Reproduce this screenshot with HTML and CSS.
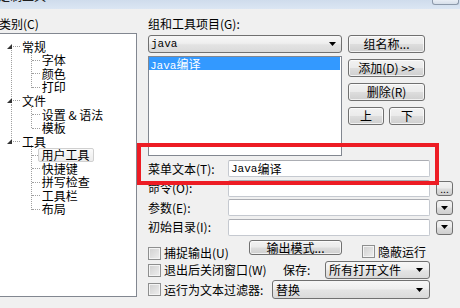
FILE: index.html
```html
<!DOCTYPE html>
<html>
<head>
<meta charset="utf-8">
<link rel="stylesheet" href="styles.css">
</head>
<body>
<div class="titlebar"><span class="title">定制工具</span><span class="tb-btn"></span></div>
<div class="main">
  <div class="left">
    <div class="lbl cat">类别(C)</div>
    <div class="tree">
      <div class="node">
        <div class="row"><span class="tog"><svg width="5" height="5" viewBox="0 0 5 5"><polygon points="5,0 5,5 0,5" fill="#333"/></svg></span><span class="hl"></span><span class="txt">常规</span></div>
        <div class="kids">
          <div class="row kid"><span class="hl"></span><span class="txt">字体</span></div>
          <div class="row kid"><span class="hl"></span><span class="txt">颜色</span></div>
          <div class="row kid"><span class="hl"></span><span class="txt">打印</span></div>
        </div>
      </div>
      <div class="node">
        <div class="row"><span class="tog"><svg width="5" height="5" viewBox="0 0 5 5"><polygon points="5,0 5,5 0,5" fill="#333"/></svg></span><span class="hl"></span><span class="txt">文件</span></div>
        <div class="kids">
          <div class="row kid"><span class="hl"></span><span class="txt">设置 &amp; 语法</span></div>
          <div class="row kid"><span class="hl"></span><span class="txt">模板</span></div>
        </div>
      </div>
      <div class="node">
        <div class="row"><span class="tog"><svg width="5" height="5" viewBox="0 0 5 5"><polygon points="5,0 5,5 0,5" fill="#333"/></svg></span><span class="hl"></span><span class="txt">工具</span></div>
        <div class="kids">
          <div class="row kid sel"><span class="hl"></span><span class="txt">用户工具</span></div>
          <div class="row kid"><span class="hl"></span><span class="txt">快捷键</span></div>
          <div class="row kid"><span class="hl"></span><span class="txt">拼写检查</span></div>
          <div class="row kid"><span class="hl"></span><span class="txt">工具栏</span></div>
          <div class="row kid"><span class="hl"></span><span class="txt">布局</span></div>
        </div>
      </div>
    </div>
  </div>

  <div class="right">
    <div class="lbl grp">组和工具项目(G):</div>
    <div class="top-area">
      <div class="col-a">
        <div class="combo"><span class="lat">java</span><span class="arrow"><svg width="7" height="4" viewBox="0 0 7 4"><polygon points="0,0 7,0 3.5,4" fill="#000"/></svg></span></div>
        <div class="list"><div class="list-sel"><span class="lat">Java</span>编译</div></div>
      </div>
      <div class="col-b">
        <div class="btn">组名称...</div>
        <div class="btn">添加(D) &gt;&gt;</div>
        <div class="btn">删除(R)</div>
        <div class="btn-pair"><div class="btn">上</div><div class="btn">下</div></div>
      </div>
    </div>

    <div class="form">
      <div class="flbl">菜单文本(T):</div>
      <div class="input"><span class="lat">Java</span>编译</div>
      <div></div>
      <div class="flbl">命令(O):</div>
      <div class="input"></div>
      <div class="sbtn dots">...</div>
      <div class="flbl">参数(E):</div>
      <div class="input"></div>
      <div class="sbtn"><svg width="7" height="4" viewBox="0 0 7 4"><polygon points="0,0 7,0 3.5,4" fill="#000"/></svg></div>
      <div class="flbl">初始目录(I):</div>
      <div class="input"></div>
      <div class="sbtn"><svg width="7" height="4" viewBox="0 0 7 4"><polygon points="0,0 7,0 3.5,4" fill="#000"/></svg></div>
    </div>

    <div class="bottom">
      <div class="brow ra">
        <label class="chk w-a"><span class="box"></span><span>捕捉输出(U)</span></label>
        <div class="btn out">输出模式...</div>
        <label class="chk hide"><span class="box"></span><span>隐蔽运行</span></label>
      </div>
      <div class="brow rb">
        <label class="chk w-b"><span class="box"></span><span>退出后关闭窗口(W)</span></label>
        <span class="save">保存:</span>
        <div class="combo c-save"><span>所有打开文件</span><span class="arrow"><svg width="7" height="4" viewBox="0 0 7 4"><polygon points="0,0 7,0 3.5,4" fill="#000"/></svg></span></div>
      </div>
      <div class="brow rc">
        <label class="chk w-c"><span class="box"></span><span>运行为文本过滤器:</span></label>
        <div class="combo c-rep"><span>替换</span><span class="arrow"><svg width="7" height="4" viewBox="0 0 7 4"><polygon points="0,0 7,0 3.5,4" fill="#000"/></svg></span></div>
      </div>
    </div>
  </div>
</div>
<div class="redbox"></div>
</body>
</html>
```
FILE: styles.css
```css
html, body {
  margin: 0;
  padding: 0;
}
body {
  width: 460px;
  height: 308px;
  overflow: hidden;
  position: relative;
  background: #f0f0f0;
  font-family: "Noto Sans CJK SC", "Liberation Sans", sans-serif;
  font-size: 12px;
  line-height: 14px;
  color: #000;
}
.lat {
  font-family: "Liberation Mono", monospace;
  font-size: 11px;
}
.titlebar {
  height: 9px;
  background: linear-gradient(#cfdcec, #dbe6f3);
  overflow: hidden;
  display: flex;
  justify-content: space-between;
}
.title {
  margin-top: -11px;
  margin-left: -2px;
  font-size: 12px;
  line-height: 14px;
  color: #1e1e1e;
}
.tb-btn {
  width: 27px;
  height: 5px;
  margin-right: 1px;
  box-sizing: border-box;
  border: 1px solid #8c99aa;
  border-top: none;
  border-radius: 0 0 3px 3px;
  background: linear-gradient(#e9eef5, #d6dfea);
}
.main {
  display: flex;
  padding-top: 8px;
}
.left {
  margin-left: -4px;
  width: 141px;
  flex: none;
}
.lbl {
  height: 14px;
  line-height: 14px;
  white-space: nowrap;
}
.cat {
  padding-left: 3px;
}
.tree {
  margin-top: 2px;
  height: 264px;
  box-sizing: border-box;
  border: 1px solid #828790;
  background: #fff;
  padding-top: 6px;
}
.node {
  position: relative;
}
.node:not(:last-child)::after {
  content: "";
  position: absolute;
  left: 14px;
  top: 10px;
  bottom: -3px;
  border-left: 1px dotted #a0a0a0;
}
.row {
  display: flex;
  align-items: center;
  height: 13.55px;
  white-space: nowrap;
}
.tog {
  display: flex;
  width: 5px;
  height: 5px;
  margin-left: 10.3px;
}
.tog svg { display: block; }
.row .hl {
  width: 7px;
  height: 0;
  margin-left: 1px;
  border-top: 1px dotted #a0a0a0;
}
.row .txt {
  margin-left: 1.7px;
  line-height: 12px;
}
.kids {
  position: relative;
  margin-left: 34px;
}
.kids::before {
  content: "";
  position: absolute;
  left: 0;
  top: -3px;
  bottom: 6.5px;
  border-left: 1px dotted #a0a0a0;
}
.kid .hl {
  width: 8px;
  margin-left: 1px;
}
.kid.sel .hl {
  width: 6px;
}
.kid.sel .txt {
  margin-left: 0;
  padding: 0 3px 0 2.6px;
  height: 12px;
  border: 1px solid #d0d0d0;
  border-radius: 2px;
  background: linear-gradient(#fbfbfb, #ececec);
}

.right {
  margin-left: 11px;
  width: 306px;
  flex: none;
}
.top-area {
  display: flex;
  gap: 6px;
  margin-top: 4px;
}
.col-a {
  width: 194px;
  flex: none;
}
.combo {
  height: 18px;
  box-sizing: border-box;
  border: 1px solid #707070;
  border-radius: 3px;
  background: linear-gradient(#f7f7f7, #efefef 45%, #e3e3e3 55%, #dadada);
  display: flex;
  align-items: center;
  justify-content: space-between;
  padding: 0 5px 0 2px;
  white-space: nowrap;
}
.arrow {
  display: flex;
}
.arrow svg { display: block; }
.list {
  margin-top: 3px;
  height: 100px;
  box-sizing: border-box;
  border: 1px solid #828790;
  background: #fff;
}
.list-sel {
  height: 13px;
  line-height: 13px;
  margin-right: 1px;
  padding-left: 1px;
  background: #3399ff;
  color: #fff;
  white-space: nowrap;
}
.col-b {
  width: 77px;
  flex: none;
  display: flex;
  flex-direction: column;
  gap: 6px;
}
.btn {
  height: 18px;
  box-sizing: border-box;
  border: 1px solid #707070;
  border-radius: 3px;
  background: linear-gradient(#f2f2f2, #ebebeb 48%, #dddddd 52%, #cfcfcf);
  box-shadow: inset 0 0 0 1px rgba(255,255,255,0.7);
  display: flex;
  align-items: center;
  justify-content: center;
  white-space: nowrap;
}
.btn-pair {
  display: flex;
  gap: 5px;
}
.btn-pair .btn {
  width: 36px;
}
.form {
  margin-top: 4px;
  display: grid;
  grid-template-columns: 80px 202px 17px;
  column-gap: 0;
  row-gap: 2.5px;
  grid-auto-rows: 17px;
}
.form > :nth-child(3n) {
  margin-left: 6px;
}
.flbl {
  display: flex;
  align-items: center;
  white-space: nowrap;
}
.input {
  box-sizing: border-box;
  border: 1px solid #c5c9d0;
  border-top-color: #abadb3;
  border-radius: 2px;
  background: #fff;
  display: flex;
  align-items: center;
  padding-left: 2px;
  white-space: nowrap;
}
.sbtn {
  width: 17px;
  height: 15px;
  align-self: center;
  box-sizing: border-box;
  border: 1px solid #707070;
  border-radius: 3px;
  background: linear-gradient(#f2f2f2, #ebebeb 48%, #dddddd 52%, #cfcfcf);
  display: flex;
  align-items: center;
  justify-content: center;
}
.sbtn.dots {
  align-items: flex-end;
  line-height: 10px;
  font-size: 10px;
  padding-bottom: 1px;
}
.sbtn svg { display: block; }
.bottom {
  margin-top: 4px;
}
.brow {
  display: flex;
}
.ra { height: 21px; }
.rb { height: 19px; align-items: center; }
.rc { height: 20px; align-items: center; }
.chk {
  display: flex;
  align-items: center;
  height: 14px;
  white-space: nowrap;
}
.box {
  width: 13px;
  height: 13px;
  flex: none;
  box-sizing: border-box;
  border: 1px solid #8e8f8f;
  background: linear-gradient(135deg, #cfcfcf, #efefef);
  box-shadow: inset 0 0 0 1px #f4f4f4;
  margin-right: 3px;
}
.w-a { width: 101px; align-self: flex-end; margin-bottom: 0.5px; }
.w-b { width: 135px; }
.w-c { width: 124px; }
.btn.out {
  width: 93px;
  height: 15px;
  margin-top: 0.5px;
}
.hide {
  margin-left: 20px;
  align-self: flex-end;
  margin-bottom: 2px;
}
.save {
  width: 42px;
  white-space: nowrap;
}
.c-save {
  width: 104.5px;
  height: 17.5px;
  padding-left: 3px;
  padding-right: 6px;
}
.c-rep {
  width: 157.5px;
  height: 19px;
  padding-left: 3px;
  padding-right: 6px;
}
.redbox {
  position: absolute;
  left: 137px;
  top: 143px;
  width: 302px;
  height: 42px;
  box-sizing: border-box;
  border: 4px solid #ed1c24;
}
```
